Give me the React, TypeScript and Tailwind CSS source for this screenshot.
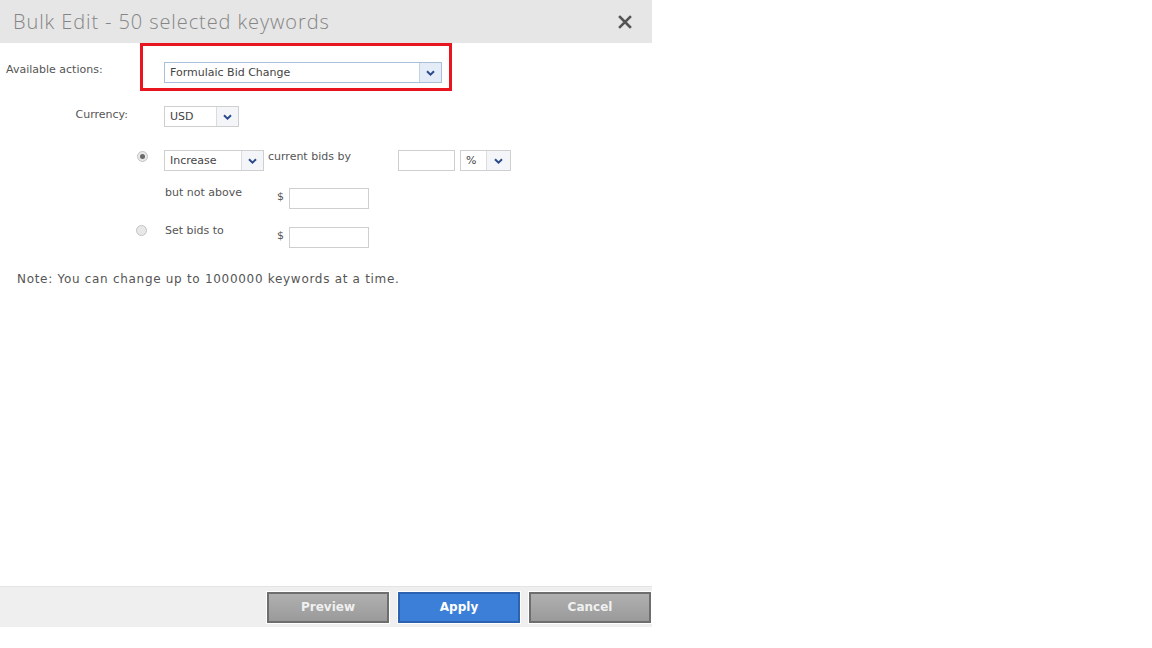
import React from 'react';

const Chevron: React.FC = () => (
  <svg width="9" height="6" viewBox="0 0 9 6" className="block">
    <path d="M1 1.2 L4.5 4.6 L8 1.2" fill="none" stroke="#2b4a8c" strokeWidth="2" />
  </svg>
);

interface SelectProps {
  value: string;
  width: string;
  arrow?: string;
  blue?: boolean;
}

const Select: React.FC<SelectProps> = ({ value, width, arrow = 'w-[22px]', blue }) => (
  <div
    className={`flex h-[21px] ${width} border ${
      blue ? 'border-[#aac0da]' : 'border-[#cfcfcf]'
    } bg-white`}
  >
    <div className="flex-1 flex items-center pl-[5px] text-[11px] text-[#444] pt-[1px]">{value}</div>
    <div
      className={`${arrow} flex items-center justify-center border-l ${
        blue ? 'border-[#c3d3e6] bg-[#e3ecf7]' : 'border-[#dcdcdc] bg-[#f3f5f8]'
      }`}
    >
      <Chevron />
    </div>
  </div>
);

const Input: React.FC<{ width: string }> = ({ width }) => (
  <div className={`h-[21px] ${width} border border-[#cfcfcf] bg-white`} />
);

const Radio: React.FC<{ checked?: boolean }> = ({ checked }) => (
  <div className="w-[11px] h-[11px] rounded-full border border-[#c4c4c4] bg-[#e8e8e8] flex items-center justify-center">
    {checked && <div className="w-[5px] h-[5px] rounded-full bg-[#6a6a6a]" />}
  </div>
);

const Button: React.FC<{ label: string; primary?: boolean }> = ({ label, primary }) => (
  <div className="border border-white">
    <div
      className={`w-[122px] h-[31px] flex items-center justify-center text-[12px] font-bold border-2 ${
        primary
          ? 'bg-[#3b7fd8] border-[#2c63b0] text-white'
          : 'bg-gradient-to-b from-[#b0b0b0] to-[#9a9a9a] border-[#6e6e6e] text-[#f0f0f0]'
      }`}
      style={{ fontFamily: '"DejaVu Sans", Verdana, sans-serif' }}
    >
      {label}
    </div>
  </div>
);

export default function App() {
  return (
    <div className="w-[1152px] h-[648px] bg-white" style={{ fontFamily: '"DejaVu Sans", sans-serif' }}>
      <div className="w-[652px] h-[627px] flex flex-col">
        {/* header */}
        <div className="h-[43px] bg-[#e6e6e6] flex items-center justify-between pl-[13px] pr-[20px] shrink-0">
          <span
            className="text-[20px] font-light text-[#858585] tracking-[0.9px]"
            style={{ fontFamily: '"Open Sans", sans-serif' }}
          >
            Bulk Edit - 50 selected keywords
          </span>
          <svg width="14" height="14" viewBox="0 0 14 14">
            <path d="M2 2 L12 12 M12 2 L2 12" stroke="#555" strokeWidth="2.6" strokeLinecap="square" />
          </svg>
        </div>

        {/* body */}
        <div className="flex-1 flex flex-col">
          <div className="flex items-center h-[48px]">
            <div className="w-[140px] pl-[6px] text-[11px] text-[#555] pt-[6px]">Available actions:</div>
            <div className="w-[312px] h-[48px] border-[3px] border-[#e8151f] pl-[21px] pt-[16px]">
              <Select value="Formulaic Bid Change" width="w-[278px]" blue />
            </div>
          </div>

          <div className="flex items-center mt-[15px]">
            <div className="w-[128px] text-right text-[11px] text-[#555] pb-[3px]">Currency:</div>
            <div className="ml-[36px]">
              <Select value="USD" width="w-[75px]" />
            </div>
          </div>

          <div className="flex items-start mt-[23px] h-[21px]">
            <div className="w-[164px] flex justify-end pr-[16px] pt-[1px]">
              <Radio checked />
            </div>
            <Select value="Increase" width="w-[100px]" />
            <span className="w-[134px] pl-[4px] text-[11px] text-[#555] -mt-[1px]">current bids by</span>
            <Input width="w-[57px]" />
            <div className="ml-[5px]">
              <Select value="%" width="w-[51px]" arrow="w-[24px]" />
            </div>
          </div>

          <div className="flex items-start mt-[17px] h-[21px]">
            <div className="w-[165px]" />
            <span className="w-[112px] text-[11px] text-[#555] -mt-[3px]">but not above</span>
            <span className="w-[12px] text-[11px] text-[#555] mt-[1px]">$</span>
            <Input width="w-[80px]" />
          </div>

          <div className="flex items-start mt-[18px] h-[21px]">
            <div className="w-[165px] flex justify-end pr-[18px] -mt-[2px]">
              <Radio />
            </div>
            <span className="w-[112px] text-[11px] text-[#555] -mt-[4px]">Set bids to</span>
            <span className="w-[12px] text-[11px] text-[#555] mt-[1px]">$</span>
            <Input width="w-[80px]" />
          </div>

          <div className="mt-[22px] pl-[17px] text-[12px] text-[#555] tracking-[0.7px]">
            Note: You can change up to 1000000 keywords at a time.
          </div>
        </div>

        {/* footer */}
        <div className="h-[41px] bg-[#efefef] border-t border-[#e4e4e4] flex items-center justify-end gap-[7px] shrink-0">
          <Button label="Preview" />
          <Button label="Apply" primary />
          <Button label="Cancel" />
        </div>
      </div>
    </div>
  );
}
